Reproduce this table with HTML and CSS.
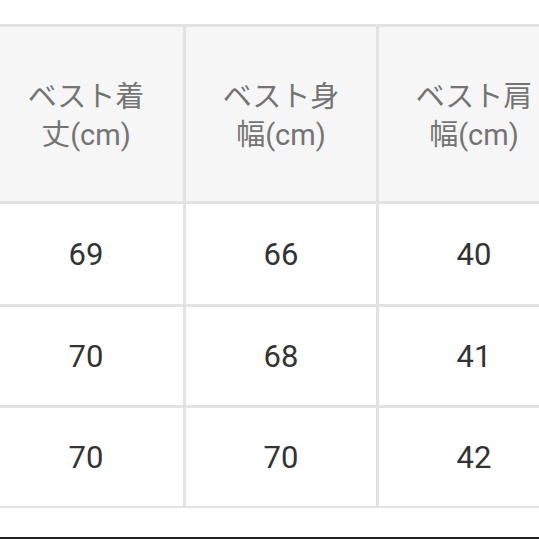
FILE: index.html
```html
<!DOCTYPE html>
<html lang="ja">
<head>
<meta charset="utf-8">
<link rel="stylesheet" href="styles.css">
</head>
<body>
<div class="page">
  <div class="table">
    <div class="cell head"><span>ベスト着<br>丈(cm)</span></div>
    <div class="cell head"><span>ベスト身<br>幅(cm)</span></div>
    <div class="cell head"><span>ベスト肩<br>幅(cm)</span></div>
    <div class="cell">69</div>
    <div class="cell">66</div>
    <div class="cell">40</div>
    <div class="cell">70</div>
    <div class="cell">68</div>
    <div class="cell">41</div>
    <div class="cell">70</div>
    <div class="cell">70</div>
    <div class="cell">42</div>
  </div>
  <div class="bottom"></div>
</div>
</body>
</html>
```
FILE: styles.css
```css
html, body {
  margin: 0;
  padding: 0;
  background: #ffffff;
  overflow: hidden;
}
.page {
  width: 539px;
  height: 539px;
  padding-top: 24px;
  box-sizing: border-box;
  overflow: hidden;
  position: relative;
  font-family: Roboto, "Noto Sans CJK JP", sans-serif;
}
.table {
  margin-left: -11px;
  width: 576px;
  display: grid;
  grid-template-columns: 194px 190px 190px;
  grid-template-rows: 174px 100px 98px 98px;
  gap: 3px;
  padding: 3px 0 2px 0;
  background: #e2e2e2;
}
.cell {
  background: #ffffff;
  display: flex;
  align-items: center;
  justify-content: center;
  font-size: 31px;
  color: #333333;
}
.head {
  background: #f6f6f6;
  color: #747474;
  font-size: 29px;
  line-height: 38px;
  text-align: center;
  white-space: nowrap;
  padding-top: 4px;
  box-sizing: border-box;
}
.bottom {
  position: absolute;
  left: 0;
  right: 0;
  top: 537px;
  height: 2px;
  background: #222222;
}
```
